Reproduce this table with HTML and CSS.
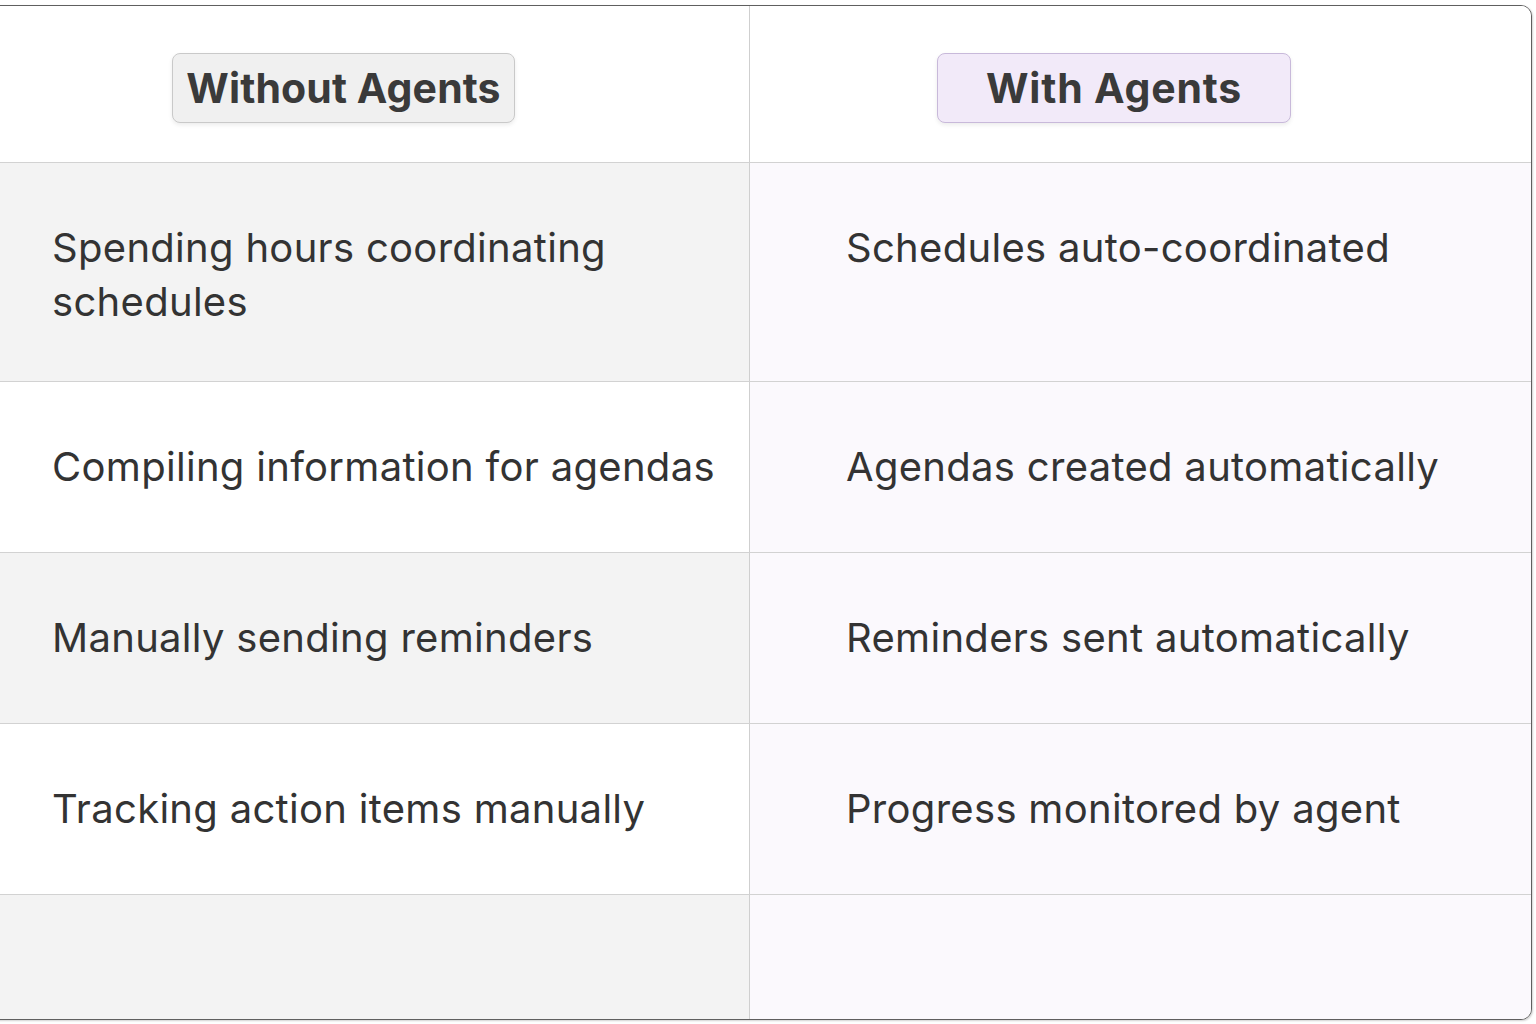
FILE: index.html
```html
<!DOCTYPE html>
<html lang="en">
<head>
<meta charset="utf-8">
<title>Without Agents vs With Agents</title>
<link rel="stylesheet" href="styles.css">
</head>
<body>
<div class="page">
  <div class="card">
    <div class="cell head left"><span class="badge badge-gray">Without Agents</span></div>
    <div class="cell head right"><span class="badge badge-purple">With Agents</span></div>

    <div class="cell left shade r1">Spending hours coordinating schedules</div>
    <div class="cell right r1">Schedules auto-coordinated</div>

    <div class="cell left">Compiling information for agendas</div>
    <div class="cell right">Agendas created automatically</div>

    <div class="cell left shade">Manually sending reminders</div>
    <div class="cell right">Reminders sent automatically</div>

    <div class="cell left">Tracking action items manually</div>
    <div class="cell right">Progress monitored by agent</div>

    <div class="cell left shade last"></div>
    <div class="cell right last"></div>
  </div>
</div>
</body>
</html>
```

FILE: styles.css
```css
html, body {
  margin: 0;
  padding: 0;
  background: #ffffff;
}

body {
  font-family: Inter, "Noto Sans", "Liberation Sans", sans-serif;
  color: #333333;
  overflow: hidden;
}

.page {
  padding-top: 5px;
  width: 1536px;
  height: 1024px;
  box-sizing: border-box;
}

.card {
  margin-left: -3px;
  width: 1535px;
  height: 1015px;
  box-sizing: border-box;
  border: 1.5px solid #5f5f5f;
  border-radius: 0 11px 11px 0;
  box-shadow: 1px 1px 2px rgba(0, 0, 0, 0.18);
  display: grid;
  grid-template-columns: 752px 1fr;
  grid-template-rows: 157px 219px 171px 171px 171px 1fr;
  overflow: hidden;
  background: #ffffff;
}

.cell {
  display: flex;
  align-items: center;
  font-size: 40px;
  line-height: 54px;
  letter-spacing: 0.3px;
  border-bottom: 1.5px solid #d2d2d2;
  box-sizing: border-box;
}

.cell.left {
  padding-left: 54px;
  padding-right: 20px;
  border-right: 1.5px solid #cfcfcf;
}

.cell.right {
  padding-left: 96px;
  padding-right: 20px;
  background: #fbf9fd;
}

.cell.r1 {
  align-items: flex-start;
  padding-top: 58px;
}

.cell.shade {
  background: #f3f3f3;
}

.cell.last {
  border-bottom: none;
}

.cell.head {
  background: #ffffff;
  justify-content: flex-start;
  padding-top: 0;
  align-items: flex-start;
}

.cell.head.left {
  padding-left: 174px;
}

.cell.head.right {
  padding-left: 187px;
}

.badge {
  margin-top: 47px;
  height: 70px;
  box-sizing: border-box;
  display: inline-flex;
  align-items: center;
  justify-content: center;
  font-weight: 700;
  font-size: 41px;
  letter-spacing: 0.1px;
  color: #3a3a3a;
  border-radius: 8px;
  box-shadow: 0 2px 4px rgba(0, 0, 0, 0.08);
}

.badge-gray {
  width: 343px;
  background: #f0f0f0;
  border: 1.5px solid #c9c9c9;
}

.badge-purple {
  width: 354px;
  background: #f2eaf9;
  border: 1.5px solid #c8b9da;
  letter-spacing: 0.8px;
}
```
